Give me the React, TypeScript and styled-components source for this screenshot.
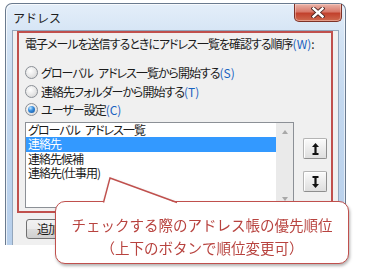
import styled, { createGlobalStyle } from "styled-components";

const GlobalStyle = createGlobalStyle`
  html, body {
    margin: 0;
    background: #ffffff;
  }
  body {
    font-family: "Noto Sans CJK JP", "Noto Sans", sans-serif;
    color: #1b1b1b;
  }
`;

const Stage = styled.div`
  position: relative;
  width: 375px;
  height: 275px;
  box-sizing: border-box;
  padding: 3px 0 0 5px;
  overflow: hidden;
`;

const Window = styled.div`
  width: 341px;
  height: 242px;
  box-sizing: border-box;
  border: 1px solid #6a7a8e;
  border-bottom: none;
  border-radius: 7px 7px 0 0;
  background: linear-gradient(180deg, #e4eef9 0%, #d3e3f4 14%, #c3d8ef 40%, #b7cfeb 100%);
  box-shadow: inset 1px 1px 0 rgba(255, 255, 255, 0.7), inset -1px 0 0 rgba(255, 255, 255, 0.6);
  padding: 0 6px;
  display: flex;
  flex-direction: column;
`;

const TitleBar = styled.div`
  height: 26px;
  display: flex;
  justify-content: space-between;
  align-items: flex-start;
`;

const Title = styled.span`
  margin: 7px 0 0 1px;
  font-size: 12px;
  line-height: 14px;
  color: #1e1e1e;
`;

const CloseButton = styled.div`
  width: 48px;
  height: 18px;
  margin-right: -3px;
  box-sizing: border-box;
  border: 1px solid #7d3228;
  border-top: none;
  border-radius: 0 0 5px 5px;
  background: linear-gradient(180deg, #eab3a8 0%, #d9796a 45%, #c2412d 55%, #cf6a4f 100%);
  box-shadow: inset 0 0 0 1px rgba(255, 220, 210, 0.45);
  display: flex;
  align-items: center;
  justify-content: center;
`;

const Client = styled.div`
  flex: 1;
  background: #f0f0f0;
  border: 1px solid #93a6bc;
  border-bottom: none;
  padding: 0 4px;
  display: flex;
  flex-direction: column;
  font-size: 12px;
  font-feature-settings: "palt";
  letter-spacing: -1px;
`;

const Highlight = styled.div`
  width: 316px;
  height: 182px;
  box-sizing: border-box;
  border: 2px solid #c0504d;
  padding: 3px 0 0 6px;
  display: flex;
  flex-direction: column;
`;

const Heading = styled.div`
  height: 16px;
  line-height: 16px;
  white-space: nowrap;
`;

const Key = styled.span`
  color: #1862c0;
  letter-spacing: 0;
`;

const Gap = styled.span`
  display: inline-block;
  width: 5px;
`;

const RadioGroup = styled.div`
  margin-top: 11.5px;
  display: flex;
  flex-direction: column;
`;

const RadioRow = styled.div`
  height: 18.5px;
  display: flex;
  align-items: center;
  gap: 3px;
  white-space: nowrap;
`;

const RadioDot = styled.span<{ $on?: boolean }>`
  width: 13px;
  height: 13px;
  box-sizing: border-box;
  border-radius: 50%;
  border: 1px solid #8a8f96;
  background: radial-gradient(circle at 40% 35%, #ffffff 0%, #e6e6e6 55%, #cfcfcf 100%);
  display: flex;
  align-items: center;
  justify-content: center;
  flex-shrink: 0;

  &::after {
    content: "";
    display: ${(p) => (p.$on ? "block" : "none")};
    width: 7px;
    height: 7px;
    border-radius: 50%;
    background: radial-gradient(circle at 35% 30%, #bfe6ff 0%, #3a8fde 40%, #0f4f9a 100%);
  }
`;

const ListArea = styled.div`
  margin-top: 3px;
  display: flex;
  gap: 9px;
`;

const ListBox = styled.div`
  width: 269px;
  height: 86px;
  box-sizing: border-box;
  border: 1px solid #8c9096;
  background: #ffffff;
  display: flex;
`;

const Items = styled.div`
  flex: 1;
  display: flex;
  flex-direction: column;
`;

const Item = styled.div<{ $selected?: boolean }>`
  height: 14.4px;
  line-height: 14.4px;
  padding-left: 2px;
  white-space: nowrap;
  background: ${(p) => (p.$selected ? "#3399ff" : "transparent")};
  color: ${(p) => (p.$selected ? "#ffffff" : "#1b1b1b")};
`;

const ScrollBar = styled.div`
  width: 17px;
  background: #eaeaea;
  display: flex;
  flex-direction: column;
  justify-content: space-between;
  align-items: center;
  padding: 7px 0 6px;
  box-sizing: border-box;
`;

const Arrow = styled.span<{ $down?: boolean }>`
  width: 0;
  height: 0;
  border-left: 3.5px solid transparent;
  border-right: 3.5px solid transparent;
  ${(p) => (p.$down ? "border-top: 4px solid #a8a8a8;" : "border-bottom: 4px solid #a8a8a8;")}
`;

const MoveButtons = styled.div`
  display: flex;
  flex-direction: column;
  gap: 12px;
  padding-top: 16px;
`;

const MoveButton = styled.div`
  width: 24px;
  height: 21px;
  box-sizing: border-box;
  border: 1px solid #b4b4b4;
  border-right-color: #8e8e8e;
  border-bottom-color: #8e8e8e;
  border-radius: 2px;
  background: linear-gradient(180deg, #fbfbfb 0%, #ececec 50%, #dedede 100%);
  box-shadow: inset 1px 1px 0 #ffffff;
  display: flex;
  align-items: center;
  justify-content: center;
`;

const AddButton = styled.div`
  margin: 6px 0 0 9px;
  width: 75px;
  height: 20px;
  box-sizing: border-box;
  border: 1px solid #707070;
  border-radius: 3px;
  background: linear-gradient(180deg, #f2f2f2 0%, #ebebeb 50%, #dddddd 51%, #cfcfcf 100%);
  padding-left: 10px;
  line-height: 18px;
  white-space: nowrap;
`;

const Callout = styled.div`
  position: absolute;
  left: 55px;
  top: 201px;
  width: 294px;
  height: 63px;
  filter: drop-shadow(1.5px 2px 1.5px rgba(0, 0, 0, 0.3));
`;

const Bubble = styled.div`
  width: 100%;
  height: 100%;
  box-sizing: border-box;
  border: 1.5px solid #c0504d;
  border-radius: 10px;
  background: #ffffff;
  padding-top: 11px;
  text-align: center;
  font-size: 14.5px;
  line-height: 23px;
  color: #b8433f;
  white-space: nowrap;
`;

const Tail = styled.svg`
  position: absolute;
  left: 0;
  top: -26px;
  overflow: visible;
`;

const CloseIcon = () => (
  <svg width="14" height="11" viewBox="0 0 14 11">
    <path d="M2.5 1.5 L11.5 9.5 M11.5 1.5 L2.5 9.5" stroke="#4a2420" strokeWidth="4.2" strokeLinecap="square" />
    <path d="M2.5 1.5 L11.5 9.5 M11.5 1.5 L2.5 9.5" stroke="#ffffff" strokeWidth="2.4" strokeLinecap="square" />
  </svg>
);

const UpIcon = () => (
  <svg width="7" height="12" viewBox="0 0 7 12">
    <path d="M3.5 0 L7 4 H4.6 V10 H6.5 V12 H0.5 V10 H2.4 V4 H0 Z" fill="#111" />
  </svg>
);

const DownIcon = () => (
  <svg width="7" height="12" viewBox="0 0 7 12">
    <path d="M3.5 12 L7 8 H4.6 V2 H6.5 V0 H0.5 V2 H2.4 V8 H0 Z" fill="#111" />
  </svg>
);

const Gal = () => (
  <>
    グローバル
    <Gap />
    アドレス一覧
  </>
);

const options = [
  { label: <><Gal />から開始する</>, key: "S", on: false },
  { label: <>連絡先フォルダーから開始する</>, key: "T", on: false },
  { label: <>ユーザー設定</>, key: "C", on: true },
];

const books = [<Gal />, "連絡先", "連絡先候補", "連絡先(仕事用)"];

export default function App() {
  return (
    <Stage>
      <GlobalStyle />
      <Window>
        <TitleBar>
          <Title>アドレス</Title>
          <CloseButton>
            <CloseIcon />
          </CloseButton>
        </TitleBar>
        <Client>
          <Highlight>
            <Heading>
              電子メールを送信するときにアドレス一覧を確認する順序<Key>(W)</Key>:
            </Heading>
            <RadioGroup>
              {options.map((o) => (
                <RadioRow key={o.key}>
                  <RadioDot $on={o.on} />
                  <span>
                    {o.label}
                    <Key>({o.key})</Key>
                  </span>
                </RadioRow>
              ))}
            </RadioGroup>
            <ListArea>
              <ListBox>
                <Items>
                  {books.map((b, i) => (
                    <Item key={i} $selected={i === 1}>
                      {b}
                    </Item>
                  ))}
                </Items>
                <ScrollBar>
                  <Arrow />
                  <Arrow $down />
                </ScrollBar>
              </ListBox>
              <MoveButtons>
                <MoveButton>
                  <UpIcon />
                </MoveButton>
                <MoveButton>
                  <DownIcon />
                </MoveButton>
              </MoveButtons>
            </ListArea>
          </Highlight>
          <AddButton>追加(D)...</AddButton>
        </Client>
      </Window>
      <Callout>
        <Bubble>
          チェックする際のアドレス帳の優先順位
          <br />
          （上下のボタンで順位変更可）
        </Bubble>
        <Tail width="140" height="30" viewBox="0 0 140 30">
          <polygon points="48,28.5 55,3 123,28.5" fill="#ffffff" />
          <polyline points="48.5,27.5 55,3 122,27.5" fill="none" stroke="#c0504d" strokeWidth="1.4" />
        </Tail>
      </Callout>
    </Stage>
  );
}
